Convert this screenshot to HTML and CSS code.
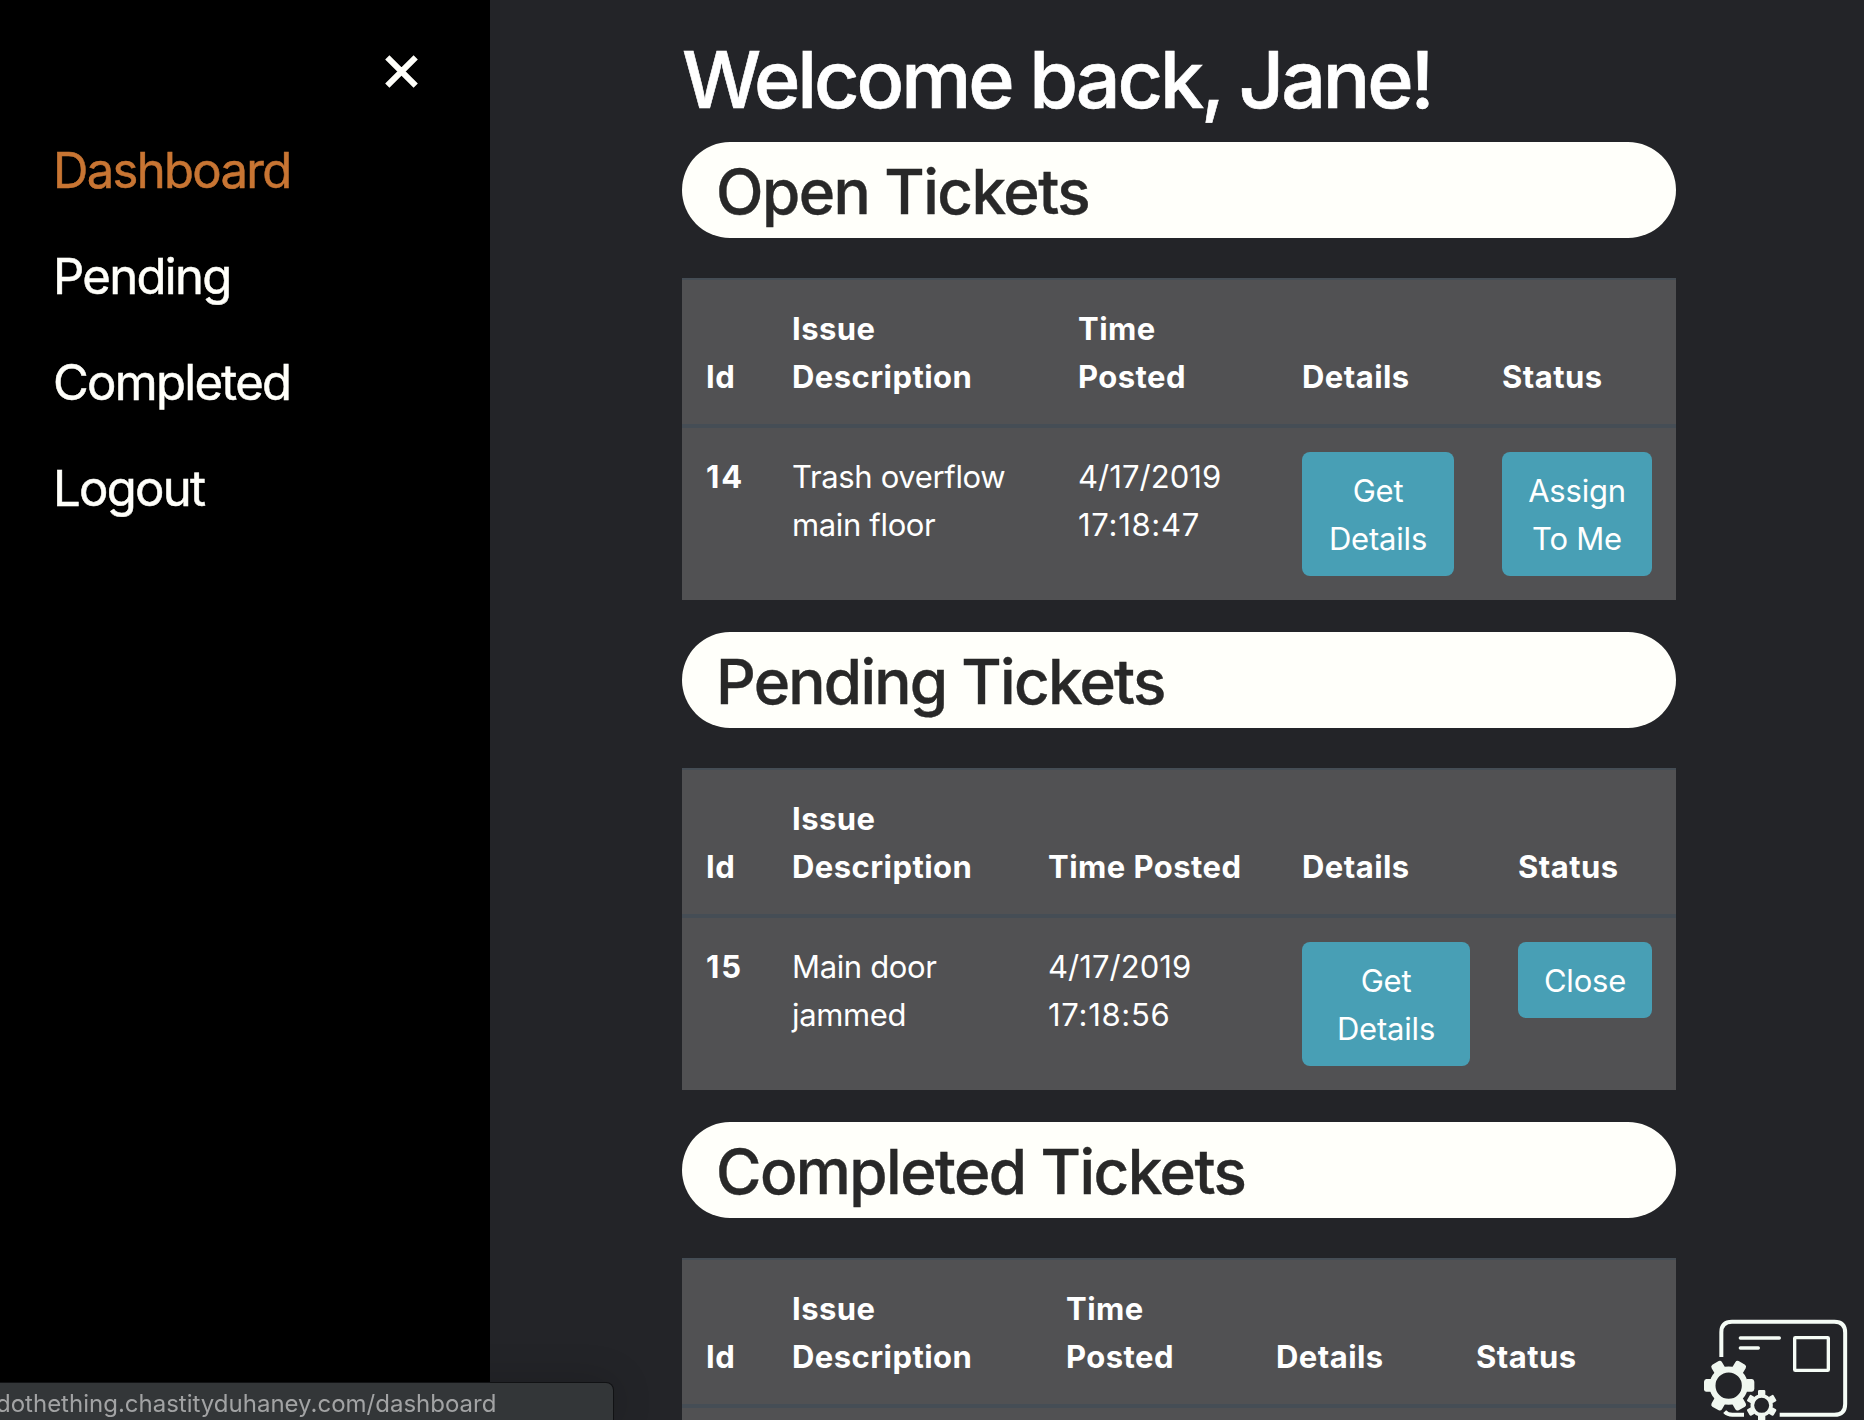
FILE: index.html
```html
<!DOCTYPE html>
<html lang="en">
<head>
<meta charset="utf-8">
<title>Dashboard</title>
<link rel="stylesheet" href="styles.css">
</head>
<body>
<div class="layout">
  <aside class="sidebar">
    <button class="close" aria-label="Close menu">
      <svg class="close-icon" viewBox="0 0 33 33"><path d="M2.3 2.3 30.7 30.7M30.7 2.3 2.3 30.7"/></svg>
    </button>
    <nav class="menu">
      <a class="menu-link active">Dashboard</a>
      <a class="menu-link">Pending</a>
      <a class="menu-link">Completed</a>
      <a class="menu-link">Logout</a>
    </nav>
  </aside>
  <main class="content">
    <h1 class="welcome">Welcome back, Jane!</h1>

    <h2 class="pill">Open Tickets</h2>
    <table class="tickets open">
      <colgroup><col class="c1"><col class="c2"><col class="c3"><col class="c4"><col class="c5"></colgroup>
      <thead><tr><th>Id</th><th>Issue<br>Description</th><th>Time<br>Posted</th><th>Details</th><th>Status</th></tr></thead>
      <tbody><tr><th>14</th><td>Trash overflow<br>main floor</td><td class="date">4/17/2019<br><span class="clock">17:18:47</span></td><td class="action"><button class="btn">Get<br>Details</button></td><td class="action"><button class="btn">Assign<br>To Me</button></td></tr></tbody>
    </table>

    <h2 class="pill pill-pending">Pending Tickets</h2>
    <table class="tickets pending">
      <colgroup><col class="c1"><col class="c2"><col class="c3"><col class="c4"><col class="c5"></colgroup>
      <thead><tr><th>Id</th><th>Issue<br>Description</th><th>Time Posted</th><th>Details</th><th>Status</th></tr></thead>
      <tbody><tr><th>15</th><td>Main door<br>jammed</td><td class="date">4/17/2019<br><span class="clock">17:18:56</span></td><td class="action"><button class="btn">Get<br>Details</button></td><td class="action"><button class="btn">Close</button></td></tr></tbody>
    </table>

    <h2 class="pill">Completed Tickets</h2>
    <table class="tickets completed">
      <colgroup><col class="c1"><col class="c2"><col class="c3"><col class="c4"><col class="c5"></colgroup>
      <thead><tr><th>Id</th><th>Issue<br>Description</th><th>Time<br>Posted</th><th>Details</th><th>Status</th></tr></thead>
      <tbody><tr><td></td><td></td><td></td><td></td><td></td></tr></tbody>
    </table>
  </main>
</div>

<svg class="logo" viewBox="0 0 552 360">
  <g class="logo-line">
    <path stroke-width="12" d="M124 171V97Q124 65.500 156 65.500H463Q495.500 65.500 495.500 98V312Q495.500 344.500 463 344.500H299"/>
    <path stroke-width="12" d="M134 335Q143 344.500 157 344.500H192"/>
    <path stroke-width="10" stroke-linecap="round" d="M181 114H298M181 144H235"/>
    <rect stroke-width="10" x="344" y="113" width="101" height="98" rx="2"/>
  </g>
  <g class="logo-gear" transform="translate(146 257)">
    <circle r="48.500" stroke-width="18"/>
    <path d="M-53-20H-67Q-73-20-74-12V12Q-73 18-67 18H-53ZM53-20H70Q76-20 77-12V10Q76 18 70 18H53Z"/>
    <path transform="rotate(60)" d="M-53-18H-71Q-78-18-79-11V11Q-78 18-71 18H-53ZM53-18H71Q78-18 79-11V11Q78 18 71 18H53Z"/>
    <path transform="rotate(120)" d="M-53-18H-71Q-78-18-79-11V11Q-78 18-71 18H-53ZM53-18H71Q78-18 79-11V11Q78 18 71 18H53Z"/>
  </g>
  <g class="logo-gear" transform="translate(245 316)">
    <circle r="28" stroke-width="11"/>
    <path transform="rotate(30)" d="M-31-11H-43Q-46-11-46-7V7Q-46 11-43 11H-31ZM31-11H43Q46-11 46-7V7Q46 11 43 11H31Z"/>
    <path transform="rotate(90)" d="M-31-11H-43Q-46-11-46-7V7Q-46 11-43 11H-31ZM31-11H43Q46-11 46-7V7Q46 11 43 11H31Z"/>
    <path transform="rotate(150)" d="M-31-11H-43Q-46-11-46-7V7Q-46 11-43 11H-31ZM31-11H43Q46-11 46-7V7Q46 11 43 11H31Z"/>
  </g>
</svg>
<div class="status-bar"><span>dothething.chastityduhaney.com/dashboard</span></div>
</body>
</html>
```
FILE: styles.css
```css
* { box-sizing: border-box; }
body {
  margin: 0;
  height: 100vh;
  overflow: hidden;
  background: #232428;
  color: #fff;
  font-family: Inter, "Liberation Sans", sans-serif;
  font-size: 31px;
  line-height: 48px;
}
.layout { display: flex; height: 100%; }
.sidebar {
  width: 490px;
  flex: none;
  background: #000;
  padding: 55px 72px 0 53px;
  display: flex;
  flex-direction: column;
}
.close {
  align-self: flex-end;
  display: block;
  width: 33px;
  height: 33px;
  padding: 0;
  border: 0;
  background: none;
}
.close-icon { display: block; width: 33px; height: 33px; fill: none; stroke: #fffffa; stroke-width: 6; }
.menu { display: flex; flex-direction: column; margin-top: 30px; }
.menu-link {
  font-size: 49px;
  line-height: 106px;
  letter-spacing: -1.7px;
  color: #fffffa;
  -webkit-text-stroke: 0.5px currentColor;
}
.menu-link.active { color: #c87533; }
.content { width: 994px; margin-left: 192px; padding-top: 31px; flex: none; }
.welcome {
  margin: 0 0 15px;
  font-size: 79px;
  line-height: 96px;
  font-weight: 500;
  letter-spacing: -3.15px;
  white-space: nowrap;
  -webkit-text-stroke: 0.6px currentColor;
}
.pill {
  height: 96px;
  margin: 0 0 40px;
  padding: 2px 34px 0;
  border-radius: 48px;
  background: #fffffa;
  color: #282828;
  font-size: 62px;
  line-height: 96px;
  font-weight: 500;
  letter-spacing: -1.55px;
  -webkit-text-stroke: 0.4px currentColor;
}
.pill-pending { letter-spacing: -1.75px; }
.tickets {
  width: 994px;
  margin-bottom: 32px;
  table-layout: fixed;
  border-spacing: 0;
  background: #515153;
}
.tickets th, .tickets td { text-align: left; vertical-align: top; padding: 25px 0 23px 24px; white-space: nowrap; }
.tickets th { font-weight: 700; letter-spacing: 0.45px; }
.tickets tbody th { letter-spacing: 2px; }
.tickets td { letter-spacing: -0.35px; }
.tickets td.date { letter-spacing: 0.05px; }
.clock { letter-spacing: 0.7px; }
.tickets thead th { vertical-align: bottom; border-top: 2px solid #454d55; border-bottom: 4px solid #454d55; }
.tickets tbody tr { height: 172px; }
.tickets td.action { padding: 24px; }
.c1 { width: 86px; }
.open .c2 { width: 286px; }
.open .c3 { width: 224px; }
.open .c4 { width: 200px; }
.open .c5 { width: 198px; }
.pending .c2 { width: 256px; }
.pending .c3 { width: 254px; }
.pending .c4 { width: 216px; }
.pending .c5 { width: 182px; }
.completed .c2 { width: 274px; }
.completed .c3 { width: 210px; }
.completed .c4 { width: 200px; }
.completed .c5 { width: 224px; }
.tickets.completed { margin-bottom: 0; }
.completed tbody tr { height: 12px; }
.completed tbody td { padding: 0; }
.btn {
  display: block;
  width: 100%;
  padding: 15px 0 13px;
  border: 0;
  border-radius: 8px;
  background: #489fb5;
  color: #fff;
  font: inherit;
  letter-spacing: -0.2px;
  text-align: center;
}
.logo { position: fixed; right: 0; bottom: 0; width: 184px; height: 120px; }
.logo-line { fill: none; stroke: #f5fcf6; }
.logo-gear { fill: #f0f7f0; }
.logo-gear circle { fill: none; stroke: #f0f7f0; }
.status-bar {
  position: fixed;
  left: 0;
  bottom: 0;
  width: 613px;
  height: 37px;
  border-top-right-radius: 7px;
  background: #333638;
  box-shadow: 0 0 0 1px #111214, 0 0 40px rgba(0, 0, 0, 0.2);
  color: #a2a3a4;
  font-size: 24px;
  line-height: 41px;
  white-space: nowrap;
}
.status-bar span { margin-left: -4px; }
```
